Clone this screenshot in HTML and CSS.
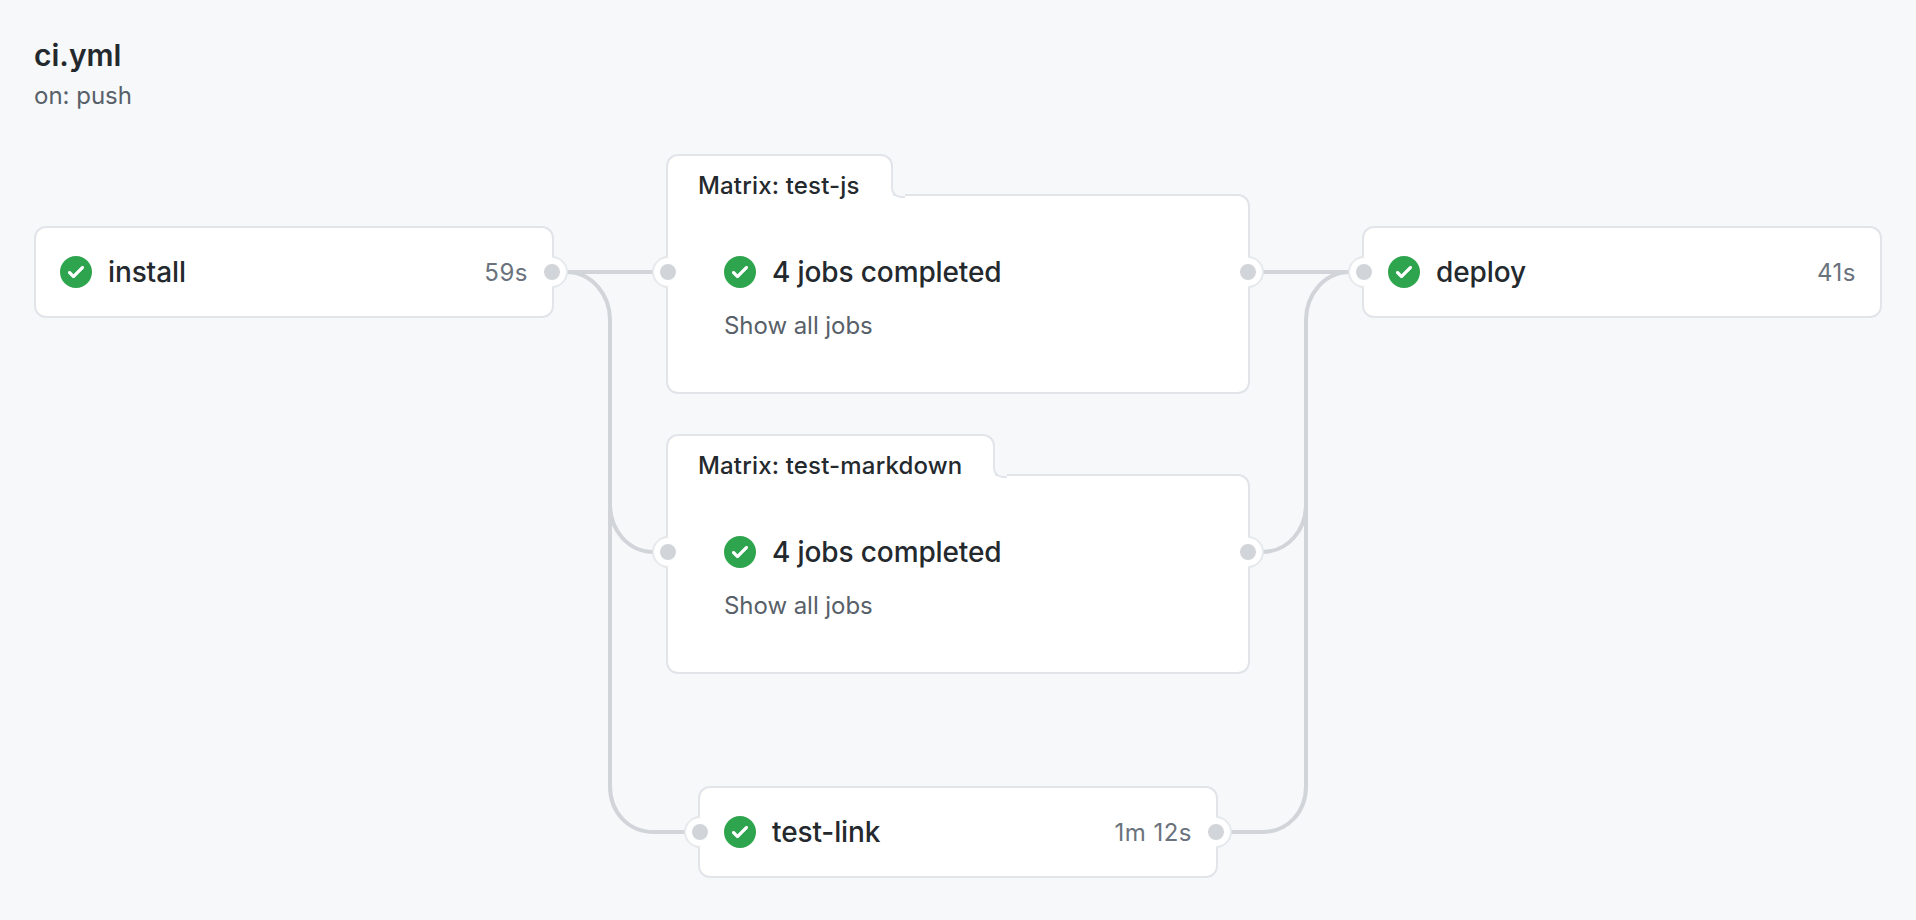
FILE: index.html
```html
<!DOCTYPE html>
<html lang="en">
<head>
<meta charset="utf-8">
<title>ci.yml</title>
<link rel="stylesheet" href="styles.css">
</head>
<body>
<svg class="defs" width="0" height="0" aria-hidden="true">
  <symbol id="check" viewBox="0 0 16 16">
    <path fill="#2ea44f" fill-rule="evenodd" d="M8 16A8 8 0 1 1 8 0a8 8 0 0 1 0 16zm3.78-9.72a.75.75 0 0 0-1.06-1.06L6.75 9.19 5.28 7.72a.75.75 0 0 0-1.06 1.06l2 2a.75.75 0 0 0 1.06 0l4.5-4.5z"/>
    <path fill="#fff" d="M11.78 6.28a.75.75 0 0 0-1.06-1.06L6.75 9.19 5.28 7.72a.75.75 0 0 0-1.06 1.06l2 2a.75.75 0 0 0 1.06 0l4.5-4.5z"/>
  </symbol>
</svg>
<main class="page">
  <header class="head">
    <h1 class="title">ci.yml</h1>
    <p class="trigger">on: push</p>
  </header>

  <svg class="lines" viewBox="0 0 1916 920" width="1916" height="920" aria-hidden="true">
    <path d="M552 272H668"/>
    <path d="M1248 272H1364"/>
    <path d="M566 272C592 272 610 295 610 320V786C610 812 628 832 654 832H700"/>
    <path d="M610 504C610 530 628 552 654 552H668"/>
    <path d="M1350 272C1324 272 1306 295 1306 320V786C1306 812 1288 832 1262 832H1216"/>
    <path d="M1306 504C1306 530 1288 552 1262 552H1248"/>
  </svg>

  <article class="job job-install">
    <svg class="status"><use href="#check"/></svg>
    <span class="job-name">install</span>
    <span class="job-time">59s</span>
    <span class="port port-right"></span>
  </article>

  <section class="matrix matrix-js">
    <div class="matrix-tab"><span class="matrix-label">Matrix: test-js</span></div>
    <div class="matrix-body">
      <span class="port port-left port-matrix"></span>
      <div class="matrix-row">
        <svg class="status"><use href="#check"/></svg>
        <span class="job-name">4 jobs completed</span>
      </div>
      <a class="show-all">Show all jobs</a>
      <span class="port port-right port-matrix"></span>
    </div>
  </section>

  <section class="matrix matrix-md">
    <div class="matrix-tab"><span class="matrix-label">Matrix: test-markdown</span></div>
    <div class="matrix-body">
      <span class="port port-left port-matrix"></span>
      <div class="matrix-row">
        <svg class="status"><use href="#check"/></svg>
        <span class="job-name">4 jobs completed</span>
      </div>
      <a class="show-all">Show all jobs</a>
      <span class="port port-right port-matrix"></span>
    </div>
  </section>

  <article class="job job-link">
    <span class="port port-left"></span>
    <svg class="status"><use href="#check"/></svg>
    <span class="job-name">test-link</span>
    <span class="job-time">1m 12s</span>
    <span class="port port-right"></span>
  </article>

  <article class="job job-deploy">
    <span class="port port-left"></span>
    <svg class="status"><use href="#check"/></svg>
    <span class="job-name">deploy</span>
    <span class="job-time">41s</span>
  </article>
</main>
</body>
</html>
```
FILE: styles.css
```css
* { box-sizing: border-box; }

html, body {
  margin: 0;
  padding: 0;
  height: 100%;
  background: #f6f8fa;
}

body {
  font-family: Inter, "Liberation Sans", sans-serif;
  color: #24292e;
  overflow: hidden;
}

.defs { position: absolute; }

.page {
  position: relative;
  width: 1916px;
  height: 920px;
}

.head { padding: 36px 34px 0; }

.title {
  margin: 0;
  font-size: 30px;
  line-height: 38px;
  font-weight: 600;
}

.trigger {
  margin: 4px 0 0;
  font-size: 24px;
  line-height: 36px;
  color: #586069;
}

.lines {
  position: absolute;
  left: 0;
  top: 0;
  fill: none;
  stroke: #d1d5da;
  stroke-width: 4;
}

.job {
  position: absolute;
  width: 520px;
  height: 92px;
  display: flex;
  align-items: center;
  padding: 0 24px;
  background: #fff;
  border: 2px solid #e1e4e8;
  border-radius: 12px;
}

.job-install { left: 34px; top: 226px; }
.job-link { left: 698px; top: 786px; }
.job-deploy { left: 1362px; top: 226px; }

.status {
  flex: none;
  width: 32px;
  height: 32px;
  margin-right: 16px;
}

.job-name {
  flex: 1;
  font-size: 28px;
  line-height: 36px;
  font-weight: 500;
  letter-spacing: -0.12px;
}

.job-time {
  padding-top: 2px;
  font-size: 24px;
  line-height: 36px;
  letter-spacing: 0.5px;
  color: #6a737d;
}

.port {
  position: absolute;
  top: calc(50% - 16px);
  width: 32px;
  height: 32px;
  border-radius: 50%;
  background: #fff;
  border: 2px solid #e6e8ec;
}

.port::after {
  content: "";
  position: absolute;
  left: 6px;
  top: 6px;
  width: 16px;
  height: 16px;
  border-radius: 50%;
  background: #d1d5da;
}

.port-left {
  left: -16px;
  border-right-color: transparent;
  border-bottom-color: transparent;
  transform: rotate(-45deg);
}

.port-right {
  right: -16px;
  border-left-color: transparent;
  border-top-color: transparent;
  transform: rotate(-45deg);
}

.port-matrix { top: 60px; }

.matrix {
  position: absolute;
  left: 666px;
  width: 584px;
  height: 240px;
}

.matrix-js { top: 154px; }
.matrix-md { top: 434px; }

.matrix-tab {
  position: relative;
  z-index: 1;
  width: fit-content;
  height: 34px;
  padding: 12px 31px 0 30px;
  background: #fff;
  border: 2px solid #e1e4e8;
  border-bottom: 0;
  border-radius: 12px 12px 0 0;
}

.matrix-tab::before {
  content: "";
  position: absolute;
  left: -2px;
  right: -2px;
  top: 100%;
  height: 8px;
  background: #fff;
  border-left: 2px solid #e1e4e8;
}

.matrix-tab::after {
  content: "";
  position: absolute;
  left: 100%;
  top: 28px;
  width: 12px;
  height: 12px;
  background: #f6f8fa;
  border-left: 2px solid #e1e4e8;
  border-bottom: 2px solid #e1e4e8;
  border-bottom-left-radius: 10px;
}

.matrix-label {
  position: relative;
  z-index: 1;
  display: block;
  font-size: 24px;
  line-height: 36px;
  font-weight: 500;
  letter-spacing: 0.17px;
  white-space: nowrap;
}

.matrix-body {
  position: relative;
  height: 200px;
  margin-top: 6px;
  padding: 60px 56px 0;
  background: #fff;
  border: 2px solid #e1e4e8;
  border-radius: 0 12px 12px 12px;
}

.matrix-row {
  display: flex;
  align-items: center;
  height: 32px;
}

.show-all {
  display: block;
  margin-top: 20px;
  font-size: 24px;
  line-height: 36px;
  color: #586069;
  letter-spacing: -0.05px;
}
```
